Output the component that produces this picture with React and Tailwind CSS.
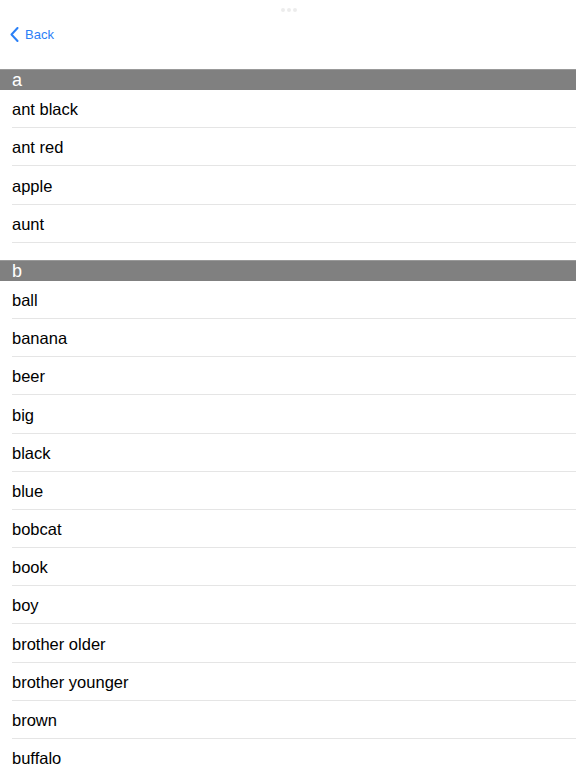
import React from "react";

const sections = [
  { letter: "a", items: ["ant black", "ant red", "apple", "aunt"] },
  {
    letter: "b",
    items: [
      "ball",
      "banana",
      "beer",
      "big",
      "black",
      "blue",
      "bobcat",
      "book",
      "boy",
      "brother older",
      "brother younger",
      "brown",
      "buffalo",
    ],
  },
];

export default function App() {
  return (
    <div
      className="w-[576px] h-[768px] overflow-hidden bg-white"
      style={{ fontFamily: '"Liberation Sans", Arial, sans-serif' }}
    >
      <div className="h-[69px] relative">
        <div className="absolute left-[281px] top-[8px] flex gap-[2px]">
          <span className="w-[4px] h-[4px] rounded-full bg-[#ececec]" />
          <span className="w-[4px] h-[4px] rounded-full bg-[#ececec]" />
          <span className="w-[4px] h-[4px] rounded-full bg-[#ececec]" />
        </div>
        <div className="flex items-center pt-[27px] pl-[10px] gap-[6px] text-[#2b80f7]">
          <svg width="9" height="15" viewBox="0 0 9 15" fill="none">
            <path d="M7.5 1 L1.5 7.5 L7.5 14" stroke="#2b80f7" strokeWidth="2" strokeLinecap="round" strokeLinejoin="round" />
          </svg>
          <span className="text-[13px] leading-none">Back</span>
        </div>
      </div>
      {sections.map((s, si) => (
        <div key={s.letter} className={si > 0 ? "mt-[17px]" : ""}>
          <div className="h-[21px] bg-[#808080] text-white text-[18px] leading-[21px] pl-[12px] border-t border-[#999999]">
            {s.letter}
          </div>
          {s.items.map((it) => (
            <div key={it} className="pl-[12px]">
              <div className="h-[38.2px] border-b border-[#e5e5e5] flex items-center pt-[2px] text-[16.5px] text-black">
                {it}
              </div>
            </div>
          ))}
        </div>
      ))}
    </div>
  );
}
